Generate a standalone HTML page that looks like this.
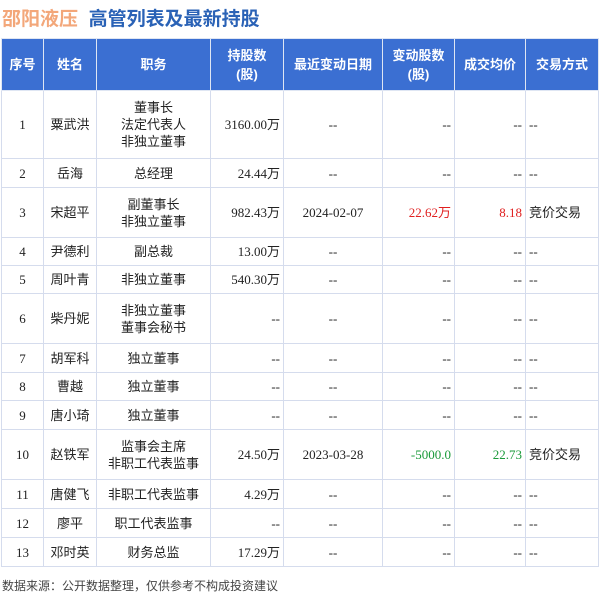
<!DOCTYPE html><html><head><meta charset="utf-8"><style>
body{margin:0;width:600px;height:597px;background:#fff;font-family:"Liberation Sans","Noto Sans CJK SC",sans-serif;position:relative;overflow:hidden}
.t{position:absolute;top:4px;left:2px;font-size:19px;font-weight:bold;letter-spacing:0px}
table{position:absolute;left:1px;top:38px;border-collapse:collapse;table-layout:fixed;width:597px;font-size:13px;color:#222}
th{background:#3b6fd2;color:#fff;font-weight:bold;font-size:13px;border:1px solid #dfe6f3;line-height:19px;padding:0}
td{border:1px solid #d5dced;text-align:center;padding:0 3px;line-height:17px;font-family:"Liberation Serif","Noto Sans CJK SC",serif;font-size:13px}
.r{text-align:right}.l{text-align:left}
.red{color:#e02020}.g{color:#1a9a3a}
.f{position:absolute;left:2px;top:577px;font-size:12px;color:#444}
</style></head><body>
<div class="t"><span style="color:#f3a77a">邵阳液压</span> <span style="color:#2a62b6">&nbsp;高管列表及最新持股</span></div>
<table>
<colgroup><col style="width:42px"><col style="width:53px"><col style="width:114px"><col style="width:73px"><col style="width:99px"><col style="width:72px"><col style="width:71px"><col style="width:73px"></colgroup>
<tr style="height:52px"><th>序号</th><th>姓名</th><th>职务</th><th>持股数<br>(股)</th><th>最近变动日期</th><th>变动股数<br>(股)</th><th>成交均价</th><th>交易方式</th></tr>
<tr style="height:68px"><td>1</td><td>粟武洪</td><td>董事长<br>法定代表人<br>非独立董事</td><td class="r">3160.00万</td><td>--</td><td class="r">--</td><td class="r">--</td><td class="l">--</td></tr>
<tr style="height:29px"><td>2</td><td>岳海</td><td>总经理</td><td class="r">24.44万</td><td>--</td><td class="r">--</td><td class="r">--</td><td class="l">--</td></tr>
<tr style="height:50px"><td>3</td><td>宋超平</td><td>副董事长<br>非独立董事</td><td class="r">982.43万</td><td>2024-02-07</td><td class="r red">22.62万</td><td class="r red">8.18</td><td class="l">竞价交易</td></tr>
<tr style="height:28px"><td>4</td><td>尹德利</td><td>副总裁</td><td class="r">13.00万</td><td>--</td><td class="r">--</td><td class="r">--</td><td class="l">--</td></tr>
<tr style="height:28px"><td>5</td><td>周叶青</td><td>非独立董事</td><td class="r">540.30万</td><td>--</td><td class="r">--</td><td class="r">--</td><td class="l">--</td></tr>
<tr style="height:50px"><td>6</td><td>柴丹妮</td><td>非独立董事<br>董事会秘书</td><td class="r">--</td><td>--</td><td class="r">--</td><td class="r">--</td><td class="l">--</td></tr>
<tr style="height:29px"><td>7</td><td>胡军科</td><td>独立董事</td><td class="r">--</td><td>--</td><td class="r">--</td><td class="r">--</td><td class="l">--</td></tr>
<tr style="height:28px"><td>8</td><td>曹越</td><td>独立董事</td><td class="r">--</td><td>--</td><td class="r">--</td><td class="r">--</td><td class="l">--</td></tr>
<tr style="height:29px"><td>9</td><td>唐小琦</td><td>独立董事</td><td class="r">--</td><td>--</td><td class="r">--</td><td class="r">--</td><td class="l">--</td></tr>
<tr style="height:50px"><td>10</td><td>赵铁军</td><td>监事会主席<br>非职工代表监事</td><td class="r">24.50万</td><td>2023-03-28</td><td class="r g">-5000.0</td><td class="r g">22.73</td><td class="l">竞价交易</td></tr>
<tr style="height:29px"><td>11</td><td>唐健飞</td><td>非职工代表监事</td><td class="r">4.29万</td><td>--</td><td class="r">--</td><td class="r">--</td><td class="l">--</td></tr>
<tr style="height:29px"><td>12</td><td>廖平</td><td>职工代表监事</td><td class="r">--</td><td>--</td><td class="r">--</td><td class="r">--</td><td class="l">--</td></tr>
<tr style="height:29px"><td>13</td><td>邓时英</td><td>财务总监</td><td class="r">17.29万</td><td>--</td><td class="r">--</td><td class="r">--</td><td class="l">--</td></tr>
</table>
<div class="f">数据来源：公开数据整理，仅供参考不构成投资建议</div>
</body></html>
